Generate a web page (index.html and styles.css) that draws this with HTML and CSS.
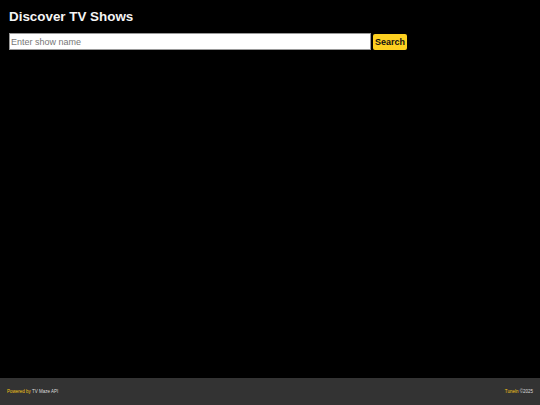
FILE: index.html
```html
<!DOCTYPE html>
<html lang="en">
<head>
    <meta charset="UTF-8">
    <meta name="viewport" content="width=device-width, initial-scale=1.0">
    <title>Discover TV Shows</title>
    <link rel="stylesheet" href="styles.css">
</head>
<body>
    <main class="content">
        <h1>Discover TV Shows</h1>
        <form class="search-form">
            <input type="text" class="search-input" placeholder="Enter show name">
            <button type="button" class="search-btn">Search</button>
        </form>
    </main>
    <footer class="footer">
        <div><span class="accent">Powered by</span> TV Maze API</div>
        <div><span class="accent">Tuneln</span> ©2025</div>
    </footer>
</body>
</html>
```

FILE: styles.css
```css
html, body {
    height: 100%;
}
body {
    margin: 0;
    display: flex;
    flex-direction: column;
    background-color: #000;
    color: #fff;
    font-family: "Liberation Sans", Arial, sans-serif;
}
.content {
    flex-grow: 1;
    padding: 8px 9px;
}
h1 {
    margin: 0 0 7px;
    font-size: 13.4px;
    line-height: 18px;
    font-weight: bold;
    color: #f4f4f4;
}
.search-form {
    display: flex;
    align-items: center;
    gap: 2px;
}
.search-input {
    box-sizing: border-box;
    width: 362px;
    height: 17px;
    padding: 0 1px;
    border: 1px solid #999;
    border-radius: 0;
    background-color: #fff;
    font-family: inherit;
    font-size: 9px;
}
.search-input::placeholder {
    color: #777;
}
.search-btn {
    height: 16px;
    padding: 0 2px;
    border: none;
    border-radius: 2px;
    background-color: #fdd020;
    color: #111;
    font-family: inherit;
    font-size: 9px;
    font-weight: bold;
}
.footer {
    height: 27px;
    display: flex;
    justify-content: space-between;
    align-items: center;
    padding: 0 7px;
    background-color: #333;
    font-size: 4.5px;
    color: #ddd;
}
.accent {
    color: #f5c518;
}
```
